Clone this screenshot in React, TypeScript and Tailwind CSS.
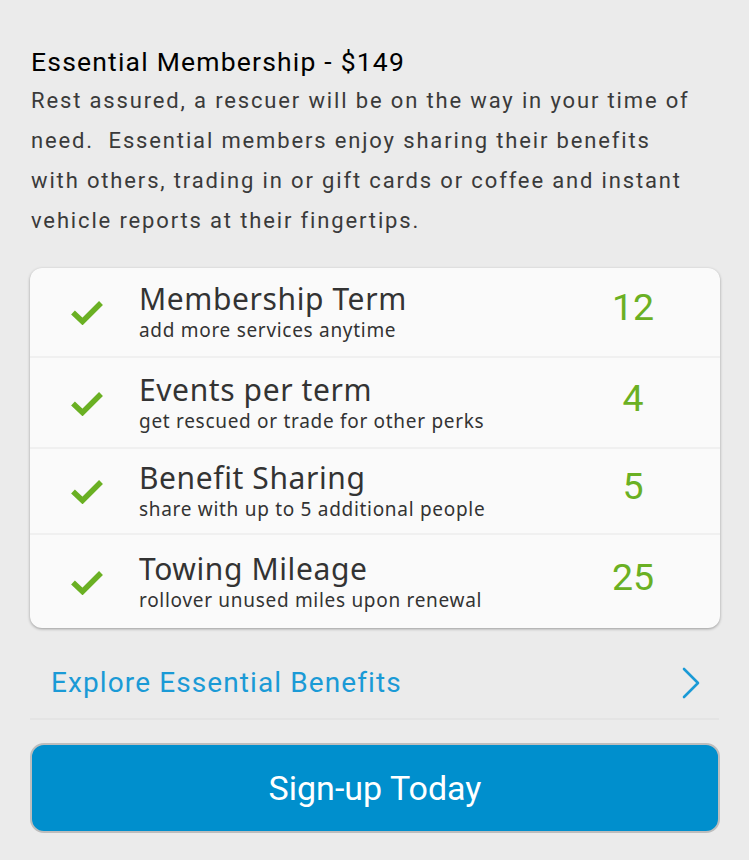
interface Perk {
  title: string;
  note: string;
  value: string;
}

const perks: Perk[] = [
  { title: "Membership Term", note: "add more services anytime", value: "12" },
  { title: "Events per term", note: "get rescued or trade for other perks", value: "4" },
  { title: "Benefit Sharing", note: "share with up to 5 additional people", value: "5" },
  { title: "Towing Mileage", note: "rollover unused miles upon renewal", value: "25" },
];

const rowHeights = ["h-[90px]", "h-[91px]", "h-[86px]", "h-[93px]"];

function Check() {
  return (
    <svg width="34" height="26" viewBox="0 0 34 26" className="shrink-0">
      <path d="M3 13.5 L12.5 22.5 L31 4" fill="none" stroke="#6ab023" strokeWidth="5.5" />
    </svg>
  );
}

function Chevron() {
  return (
    <svg width="20" height="32" viewBox="0 0 20 32">
      <path d="M3 2 L17 16 L3 30" fill="none" stroke="#1a9ad6" strokeWidth="2.6" strokeLinecap="round" strokeLinejoin="round" />
    </svg>
  );
}

export default function App() {
  return (
    <div className="min-h-screen w-[749px] bg-[#ebebeb] font-['Roboto',sans-serif]">
      <div className="pl-[31px] pr-[46px] pt-[45px]">
        <h1 className="text-[26.5px] leading-[34px] tracking-[1.2px] text-black">Essential Membership - $149</h1>
        <p className="mt-[2px] text-[22px] leading-[40px] tracking-[1.85px] text-[#3a3a3a]">
          Rest assured, a rescuer will be on the way in your time of need.&nbsp; Essential members enjoy sharing their benefits with others, trading in or gift cards or coffee and instant vehicle reports at their fingertips.
        </p>
      </div>

      <div className="mx-[30px] mt-[27px] w-[690px] overflow-hidden rounded-[12px] bg-[#fafafa] shadow-[0_1px_3px_rgba(0,0,0,0.35)]">
        {perks.map((p, i) => (
          <div
            key={p.title}
            className={`flex items-center ${rowHeights[i]} ${i < perks.length - 1 ? "border-b-2 border-[#f0f0f0]" : ""}`}
          >
            <div className="flex w-[109px] justify-center pl-[4px]">
              <Check />
            </div>
            <div className="flex-1 font-['Noto_Sans',sans-serif] text-[#333]">
              <div className="text-[30px] leading-[36px] tracking-[0.6px]">{p.title}</div>
              <div className="text-[19px] leading-[26px] tracking-[0.7px]">{p.note}</div>
            </div>
            <div className="mr-[27px] w-[120px] pb-[10px] text-center text-[37.5px] leading-[44px] text-[#6ab023]">{p.value}</div>
          </div>
        ))}
      </div>

      <div className="mx-[30px] mt-[20px] flex h-[72px] items-center justify-between border-b-2 border-[#e4e4e4] pl-[21px] pr-[18px]">
        <span className="text-[28px] tracking-[1.1px] text-[#1a9ad6]">Explore Essential Benefits</span>
        <Chevron />
      </div>

      <div className="mx-[30px] mt-[23px]">
        <button className="flex h-[90px] w-[690px] items-center justify-center rounded-[14px] border-2 border-[#bdbdbd] bg-[#008fcd] text-[34px] text-white">
          Sign-up Today
        </button>
      </div>
    </div>
  );
}
